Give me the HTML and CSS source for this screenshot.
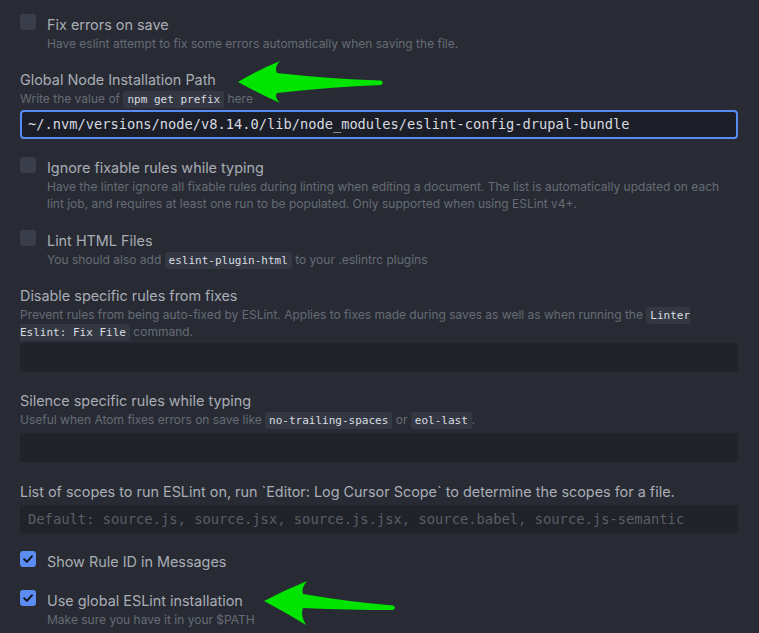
FILE: index.html
```html
<!DOCTYPE html>
<html>
<head>
<meta charset="utf-8">
<link rel="stylesheet" href="styles.css">
</head>
<body>
<div class="page">
  <div class="setting check">
    <span class="box"></span>
    <div class="body">
      <div class="title">Fix errors on save</div>
      <div class="desc">Have eslint attempt to fix some errors automatically when saving the file.</div>
    </div>
  </div>

  <div class="setting with-input">
    <div class="title">Global Node Installation Path</div>
    <div class="desc">Write the value of <code>npm get prefix</code> here</div>
    <div class="input focused">~/.nvm/versions/node/v8.14.0/lib/node_modules/eslint-config-drupal-bundle</div>
  </div>

  <div class="setting check">
    <span class="box"></span>
    <div class="body">
      <div class="title">Ignore fixable rules while typing</div>
      <div class="desc">Have the linter ignore all fixable rules during linting when editing a document. The list is automatically updated on each lint job, and requires at least one run to be populated. Only supported when using ESLint v4+.</div>
    </div>
  </div>

  <div class="setting check">
    <span class="box"></span>
    <div class="body">
      <div class="title">Lint HTML Files</div>
      <div class="desc">You should also add <code>eslint-plugin-html</code> to your .eslintrc plugins</div>
    </div>
  </div>

  <div class="setting with-input">
    <div class="title">Disable specific rules from fixes</div>
    <div class="desc">Prevent rules from being auto-fixed by ESLint. Applies to fixes made during saves as well as when running the <code>Linter Eslint: Fix File</code> command.</div>
    <div class="input"></div>
  </div>

  <div class="setting with-input">
    <div class="title">Silence specific rules while typing</div>
    <div class="desc">Useful when Atom fixes errors on save like <code>no-trailing-spaces</code> or <code>eol-last</code>.</div>
    <div class="input loose"></div>
  </div>

  <div class="setting with-input">
    <div class="title">List of scopes to run ESLint on, run `Editor: Log Cursor Scope` to determine the scopes for a file.</div>
    <div class="input scopes"><span class="placeholder">Default: source.js, source.jsx, source.js.jsx, source.babel, source.js-semantic</span></div>
  </div>

  <div class="setting check spaced">
    <span class="box on"><svg viewBox="0 0 16 16" width="16" height="16"><path d="M4.2 8.3 L6.9 10.9 L11.9 5.3" fill="none" stroke="#10131a" stroke-width="2" stroke-linecap="round" stroke-linejoin="round"/></svg></span>
    <div class="body">
      <div class="title">Show Rule ID in Messages</div>
    </div>
  </div>

  <div class="setting check">
    <span class="box on"><svg viewBox="0 0 16 16" width="16" height="16"><path d="M4.2 8.3 L6.9 10.9 L11.9 5.3" fill="none" stroke="#10131a" stroke-width="2" stroke-linecap="round" stroke-linejoin="round"/></svg></span>
    <div class="body">
      <div class="title">Use global ESLint installation</div>
      <div class="desc">Make sure you have it in your $PATH</div>
    </div>
  </div>

  <svg class="arrows" width="759" height="633" viewBox="0 0 759 633">
    <path d="M238,82 Q258,70 280,61 Q274,67 277,73 Q330,79 381,80.5 Q384.5,82.5 381,85 Q330,87 277,93 Q274,97 280,103 Q258,93 238,82 Z" fill="#00e400"/>
    <path d="M264,601 Q285,590 307,581 Q301,588 303,594 Q350,602 393,605.5 Q397,607.5 393,610 Q350,610 303,608 Q300,615 306,625 Q285,612 264,601 Z" fill="#00e400"/>
  </svg>
</div>
</body>
</html>
```

FILE: styles.css
```css
html, body {
  margin: 0;
  padding: 0;
  background: #282b34;
}
body {
  font-family: Inter, "Noto Sans", sans-serif;
  width: 759px;
  height: 633px;
  overflow: hidden;
}
.page {
  position: relative;
  padding: 14.5px 21px 0 20px;
}
.setting {
  margin-bottom: 18.5px;
}
.setting.with-input {
  padding-bottom: 1px;
}
.setting.spaced {
  margin-bottom: 20px;
}
.check {
  display: flex;
  gap: 11px;
  align-items: flex-start;
}
.body {
  flex: 1;
  min-width: 0;
}
.box {
  flex: none;
  width: 16px;
  height: 16px;
  border-radius: 3px;
  background: #3a3e4a;
  margin-top: -1px;
  display: flex;
}
.box.on {
  background: #5b8cf2;
}
.title {
  color: #a9adb5;
  font-size: 14.4px;
  line-height: 19px;
}
.desc {
  color: #666b76;
  font-size: 12px;
  line-height: 17px;
  margin-top: 1px;
}
code {
  font-family: "DejaVu Sans Mono", monospace;
  font-size: 11px;
  line-height: 1;
  color: #dadde3;
  background: #343842;
  border-radius: 3px;
  padding: 2px 4px;
}
.input {
  margin-top: 2.5px;
  height: 29px;
  box-sizing: border-box;
  background: #21232a;
  border-radius: 3px;
  font-family: "DejaVu Sans Mono", monospace;
  font-size: 13.7px;
  line-height: 25px;
  padding: 2px 8px;
  color: #d7dae0;
  white-space: nowrap;
}
.input.loose {
  margin-top: 5px;
}
.input.focused {
  background: #1b1e26;
  border: 2px solid #578af2;
  border-radius: 4px;
  padding: 0 6px;
}
.input.scopes {
  margin-top: 4px;
  height: 28px;
  line-height: 24px;
  font-size: 13.8px;
}
.placeholder {
  color: #5a5e67;
}
.arrows {
  position: absolute;
  left: 0;
  top: 0;
}
```
